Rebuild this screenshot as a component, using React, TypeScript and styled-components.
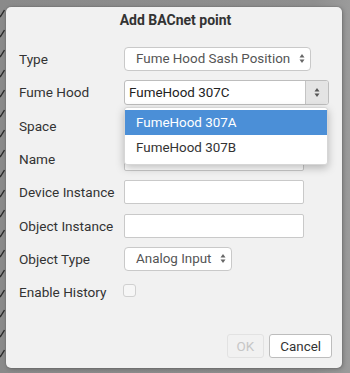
import React from "react";
import styled, { createGlobalStyle } from "styled-components";

const GlobalStyle = createGlobalStyle`
  html, body {
    margin: 0;
    padding: 0;
    background: #8e8e8e;
  }
  * {
    box-sizing: border-box;
  }
`;

const Screen = styled.div`
  width: 350px;
  height: 373px;
  display: flex;
  padding: 7px 8px 5px 0;
  background: linear-gradient(90deg, #8a8a8a 0%, #8f8f8f 90%, #9b9b9b 100%);
  font-family: Roboto, "Liberation Sans", sans-serif;
  overflow: hidden;
`;

const Strip = styled.div`
  width: 6px;
  flex: none;
  overflow: hidden;
  display: flex;
  flex-direction: column;
  gap: 4px;
  margin-top: -7px;
  padding-top: 5px;
`;

const Tick = styled.svg`
  display: block;
  flex: none;
  margin-left: -3px;
`;

const Dialog = styled.div`
  flex: 1;
  position: relative;
  display: flex;
  flex-direction: column;
  background: #f1f1f1;
  border-radius: 5px;
  box-shadow: 0 0 0 1px rgba(0, 0, 0, 0.05), 1px 1px 4px rgba(0, 0, 0, 0.25);
  padding: 1px 10px 10px 13px;
`;

const Title = styled.div`
  height: 24px;
  line-height: 24px;
  text-align: center;
  font-size: 14px;
  font-weight: 700;
  color: #333;
`;

const Form = styled.div`
  display: grid;
  grid-template-columns: 105px 1fr;
  grid-auto-rows: 33.33px;
  align-items: center;
  margin-top: 10.3px;
`;

const Label = styled.div`
  font-size: 13.6px;
  color: #333;
`;

const Cell = styled.div`
  position: relative;
  display: flex;
  align-items: center;
`;

const SelectBox = styled.div<{ $w: number }>`
  width: ${({ $w }) => $w}px;
  height: 24px;
  display: flex;
  align-items: center;
  justify-content: space-between;
  padding: 0 5px 0 11px;
  background: #fff;
  border: 1px solid #c9c9c9;
  border-radius: 4px;
  font-size: 13.4px;
  color: #555;
  white-space: nowrap;
`;

const TextInput = styled.div<{ $w: number }>`
  width: ${({ $w }) => $w}px;
  height: 24px;
  background: #fff;
  border: 1px solid #c9c9c9;
  border-radius: 2px;
`;

const Combo = styled.div`
  width: 205px;
  height: 25px;
  display: flex;
  border: 1px solid #bdbdbd;
  border-radius: 3px;
  background: #fff;
  overflow: hidden;
`;

const ComboText = styled.div`
  flex: 1;
  padding-left: 4px;
  line-height: 23px;
  font-size: 13.4px;
  color: #222;
`;

const ComboButton = styled.div`
  width: 23px;
  flex: none;
  display: flex;
  align-items: center;
  justify-content: center;
  background: #e4e4e4;
  border-left: 1px solid #c4c4c4;
`;

const Menu = styled.div`
  position: absolute;
  top: 27px;
  left: 0;
  width: 204px;
  padding: 2px 0 4px;
  background: #fff;
  border: 1px solid #d6d6d6;
  border-radius: 3px;
  box-shadow: 0 3px 8px rgba(0, 0, 0, 0.25);
  z-index: 2;
`;

const MenuItem = styled.div<{ $active?: boolean }>`
  height: 25px;
  line-height: 25px;
  padding-left: 11px;
  font-size: 13.4px;
  background: ${({ $active }) => ($active ? "#4b8fd7" : "transparent")};
  color: ${({ $active }) => ($active ? "#fff" : "#333")};
`;

const Checkbox = styled.div`
  width: 13px;
  height: 13px;
  margin-left: -1px;
  margin-top: -3px;
  border: 1px solid #d0d0d0;
  border-radius: 3px;
  background: #f6f6f6;
`;

const Footer = styled.div`
  margin-top: auto;
  display: flex;
  justify-content: flex-end;
  gap: 5px;
`;

const Button = styled.button<{ $disabled?: boolean }>`
  height: 24px;
  padding: 0 ${({ $disabled }) => ($disabled ? 9 : 10)}px;
  font-family: Roboto, "Liberation Sans", sans-serif;
  font-size: 13.4px;
  border-radius: 3px;
  background: ${({ $disabled }) => ($disabled ? "#f1f1f1" : "#fff")};
  border: 1px solid ${({ $disabled }) => ($disabled ? "#e2e2e2" : "#bdbdbd")};
  color: ${({ $disabled }) => ($disabled ? "#c6c6c6" : "#333")};
`;

const Arrows = ({ color = "#666" }: { color?: string }) => (
  <svg width="6" height="11" viewBox="0 0 6 11">
    <path d="M3 1 L5.5 4.5 L0.5 4.5 Z" fill={color} />
    <path d="M3 10 L5.5 6.5 L0.5 6.5 Z" fill={color} />
  </svg>
);

const ticks = Array.from({ length: 18 }, (_, i) => i);

export default function App() {
  return (
    <>
      <GlobalStyle />
      <Screen>
        <Strip>
          {ticks.map((i) => (
            <Tick key={i} width="8" height="16" viewBox="0 0 8 16">
              <path d="M1 9 L3.5 11.5 L7.5 5" fill="none" stroke="#2b2b2b" strokeWidth="1.4" />
            </Tick>
          ))}
        </Strip>
        <Dialog>
          <Title>Add BACnet point</Title>
          <Form>
            <Label>Type</Label>
            <Cell>
              <SelectBox $w={187}>
                Fume Hood Sash Position
                <Arrows />
              </SelectBox>
            </Cell>

            <Label>Fume Hood</Label>
            <Cell>
              <Combo>
                <ComboText>FumeHood 307C</ComboText>
                <ComboButton>
                  <Arrows color="#555" />
                </ComboButton>
              </Combo>
              <Menu>
                <MenuItem $active>FumeHood 307A</MenuItem>
                <MenuItem>FumeHood 307B</MenuItem>
              </Menu>
            </Cell>

            <Label>Space</Label>
            <Cell>
              <TextInput $w={180} />
            </Cell>

            <Label>Name</Label>
            <Cell>
              <TextInput $w={180} />
            </Cell>

            <Label>Device Instance</Label>
            <Cell>
              <TextInput $w={180} />
            </Cell>

            <Label>Object Instance</Label>
            <Cell>
              <TextInput $w={180} />
            </Cell>

            <Label>Object Type</Label>
            <Cell>
              <SelectBox $w={108}>
                Analog Input
                <Arrows />
              </SelectBox>
            </Cell>

            <Label>Enable History</Label>
            <Cell>
              <Checkbox />
            </Cell>
          </Form>
          <Footer>
            <Button $disabled>OK</Button>
            <Button>Cancel</Button>
          </Footer>
        </Dialog>
      </Screen>
    </>
  );
}
